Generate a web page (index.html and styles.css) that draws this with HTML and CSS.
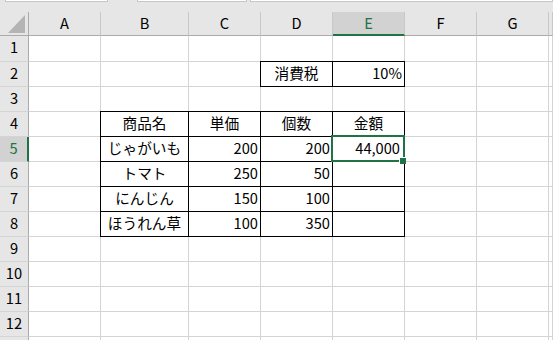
FILE: index.html
```html
<!DOCTYPE html>
<html lang="ja">
<head>
<meta charset="utf-8">
<link rel="stylesheet" href="styles.css">
</head>
<body>
<div class="topbar">
  <div class="box name"></div>
  <div class="box fx"></div>
  <div class="box formula"></div>
</div>
<div class="sheet">
  <div class="c corner"><svg width="28" height="23" viewBox="0 0 28 23"><polygon points="25,3 25,21 8,21" fill="#b4b4b4"/></svg></div>
  <div class="c ch">A</div><div class="c ch">B</div><div class="c ch">C</div><div class="c ch">D</div><div class="c ch sel">E</div><div class="c ch">F</div><div class="c ch">G</div><div class="c ch"></div>

  <div class="c rh">1</div><div class="c"></div><div class="c"></div><div class="c"></div><div class="c"></div><div class="c"></div><div class="c"></div><div class="c"></div><div class="c"></div>

  <div class="c rh">2</div><div class="c"></div><div class="c"></div><div class="c"></div><div class="c b ctr">消費税</div><div class="c b r">10%</div><div class="c"></div><div class="c"></div><div class="c"></div>

  <div class="c rh">3</div><div class="c"></div><div class="c"></div><div class="c"></div><div class="c"></div><div class="c"></div><div class="c"></div><div class="c"></div><div class="c"></div>

  <div class="c rh">4</div><div class="c"></div><div class="c b ctr">商品名</div><div class="c b ctr">単価</div><div class="c b ctr">個数</div><div class="c b ctr">金額</div><div class="c"></div><div class="c"></div><div class="c"></div>

  <div class="c rh sel">5</div><div class="c"></div><div class="c b ctr">じゃがいも</div><div class="c b r">200</div><div class="c b r">200</div><div class="c b r active">44,000<span class="sel-box"></span><span class="handle"></span></div><div class="c"></div><div class="c"></div><div class="c"></div>

  <div class="c rh">6</div><div class="c"></div><div class="c b ctr">トマト</div><div class="c b r">250</div><div class="c b r">50</div><div class="c b"></div><div class="c"></div><div class="c"></div><div class="c"></div>

  <div class="c rh">7</div><div class="c"></div><div class="c b ctr">にんじん</div><div class="c b r">150</div><div class="c b r">100</div><div class="c b"></div><div class="c"></div><div class="c"></div><div class="c"></div>

  <div class="c rh">8</div><div class="c"></div><div class="c b ctr">ほうれん草</div><div class="c b r">100</div><div class="c b r">350</div><div class="c b"></div><div class="c"></div><div class="c"></div><div class="c"></div>

  <div class="c rh">9</div><div class="c"></div><div class="c"></div><div class="c"></div><div class="c"></div><div class="c"></div><div class="c"></div><div class="c"></div><div class="c"></div>

  <div class="c rh">10</div><div class="c"></div><div class="c"></div><div class="c"></div><div class="c"></div><div class="c"></div><div class="c"></div><div class="c"></div><div class="c"></div>

  <div class="c rh">11</div><div class="c"></div><div class="c"></div><div class="c"></div><div class="c"></div><div class="c"></div><div class="c"></div><div class="c"></div><div class="c"></div>

  <div class="c rh">12</div><div class="c"></div><div class="c"></div><div class="c"></div><div class="c"></div><div class="c"></div><div class="c"></div><div class="c"></div><div class="c"></div>

  <div class="c rh"></div><div class="c"></div><div class="c"></div><div class="c"></div><div class="c"></div><div class="c"></div><div class="c"></div><div class="c"></div><div class="c"></div>
</div>
</body>
</html>
```
FILE: styles.css
```css
* {
  box-sizing: border-box;
  margin: 0;
  padding: 0;
}

html, body {
  width: 553px;
  height: 340px;
  overflow: hidden;
}

body {
  background: #e6e6e6;
  font-family: "Noto Sans CJK JP", "Noto Sans", sans-serif;
  font-size: 14.67px;
  color: #000;
}

.topbar {
  height: 12px;
  display: flex;
  align-items: flex-start;
}

.box {
  height: 2px;
  background: #fff;
  border: 1px solid #c6c6c6;
  border-top: none;
}

.box.name {
  margin-left: 5px;
  width: 103px;
}

.box.fx {
  margin-left: 29px;
  width: 110px;
}

.box.formula {
  margin-left: 3px;
  flex: 1;
}

.sheet {
  display: grid;
  grid-template-columns: 29px 72px 88px 72px 72px 72px 72px 72px 1fr;
  grid-template-rows: 24px 26px repeat(11, 25px) 4px;
  background: #fff;
}

.c {
  border-right: 1px solid #d4d4d4;
  border-bottom: 1px solid #d4d4d4;
  line-height: 22px;
  white-space: nowrap;
  background: #fff;
}

.corner {
  background: #e6e6e6;
  border-right-color: #ababab;
  border-bottom-color: #ababab;
}

.corner svg {
  display: block;
}

.ch {
  background: #e6e6e6;
  border-right-color: #c8c8c8;
  border-bottom-color: #ababab;
  text-align: center;
}

.ch.sel {
  background: #d2d2d2;
  color: #217346;
  border-bottom: 2px solid #217346;
}

.rh {
  background: #e6e6e6;
  border-right-color: #ababab;
  border-bottom-color: #d4d4d4;
  text-align: center;
}

.rh.sel {
  background: #d2d2d2;
  color: #217346;
  border-right: 2px solid #217346;
}

.b {
  border-right-color: #000;
  border-bottom-color: #000;
  box-shadow: -1px 0 0 #000, 0 -1px 0 #000, -1px -1px 0 #000;
}

.ctr {
  text-align: center;
}

.r {
  text-align: right;
  padding-right: 2px;
}

.active {
  position: relative;
  padding-right: 4px;
}

.sel-box {
  position: absolute;
  left: -2px;
  top: -2px;
  right: -1px;
  bottom: -1px;
  border: 2px solid #217346;
}

.handle {
  position: absolute;
  width: 7px;
  height: 7px;
  right: -2px;
  bottom: -3px;
  background: #217346;
  border-left: 1px solid #fff;
  border-top: 1px solid #fff;
}
```
